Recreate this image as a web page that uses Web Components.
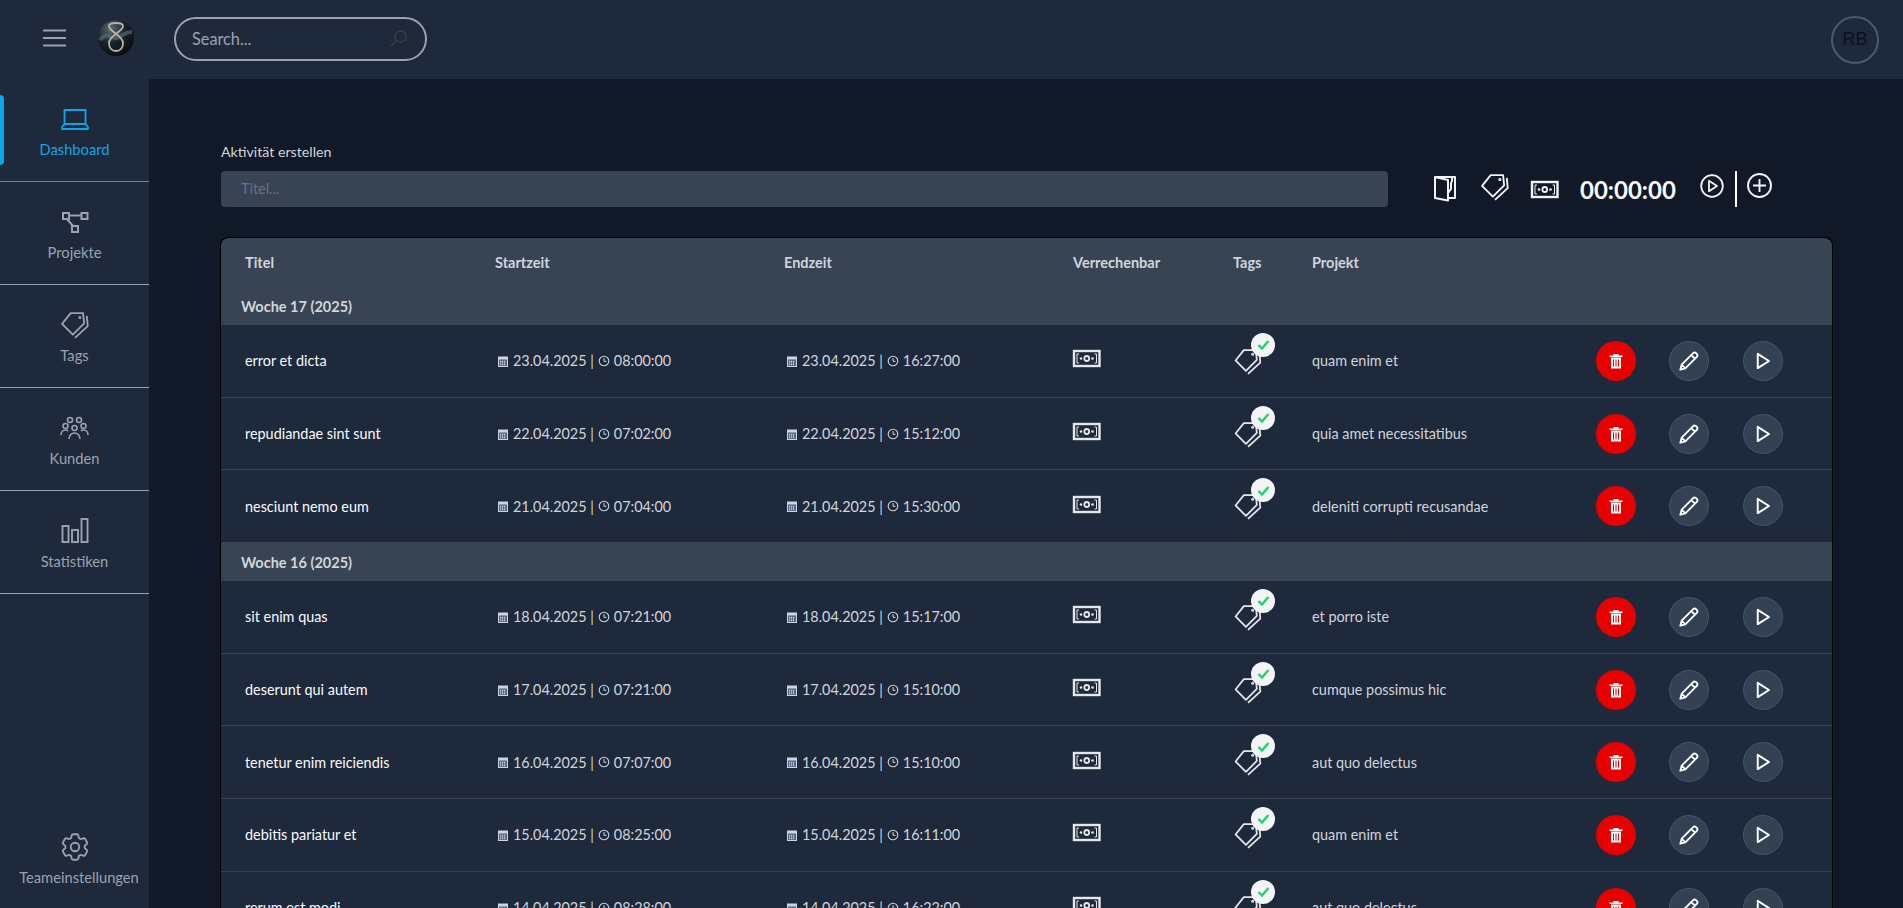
<!DOCTYPE html>
<html lang="de">
<head>
<meta charset="utf-8">
<title>Dashboard</title>
<style>
html,body{margin:0;height:100%;background:#111827;overflow:hidden;font-family:"Lato","Open Sans",sans-serif}
</style>
</head>
<body>
<app-shell>
  <app-topbar slot="top"></app-topbar>
  <app-sidebar slot="side">
    <nav-item icon="laptop" active>Dashboard</nav-item>
    <nav-item icon="nodes">Projekte</nav-item>
    <nav-item icon="tags">Tags</nav-item>
    <nav-item icon="people">Kunden</nav-item>
    <nav-item icon="bars">Statistiken</nav-item>
    <nav-item icon="gear" slot="bottom" plain>Teameinstellungen</nav-item>
  </app-sidebar>
  <activity-form></activity-form>
  <time-table>
    <week-row>Woche 17 (2025)</week-row>
    <time-row title="error et dicta" d="23.04.2025" s="08:00:00" e="16:27:00" p="quam enim et"></time-row>
    <time-row title="repudiandae sint sunt" d="22.04.2025" s="07:02:00" e="15:12:00" p="quia amet necessitatibus"></time-row>
    <time-row title="nesciunt nemo eum" d="21.04.2025" s="07:04:00" e="15:30:00" p="deleniti corrupti recusandae"></time-row>
    <week-row>Woche 16 (2025)</week-row>
    <time-row title="sit enim quas" d="18.04.2025" s="07:21:00" e="15:17:00" p="et porro iste"></time-row>
    <time-row title="deserunt qui autem" d="17.04.2025" s="07:21:00" e="15:10:00" p="cumque possimus hic"></time-row>
    <time-row title="tenetur enim reiciendis" d="16.04.2025" s="07:07:00" e="15:10:00" p="aut quo delectus"></time-row>
    <time-row title="debitis pariatur et" d="15.04.2025" s="08:25:00" e="16:11:00" p="quam enim et"></time-row>
    <time-row title="rerum est modi" d="14.04.2025" s="08:28:00" e="16:22:00" p="aut quo delectus"></time-row>
  </time-table>
</app-shell>
<script>
const ICONS={
 laptop:'<path d="M3.500 15V1h21v14M3.500 15 1 18v2h26v-2l-2.500-3z" fill="none" stroke="currentColor" stroke-width="1.800" stroke-linejoin="round"/>',
 nodes:'<g fill="none" stroke="currentColor" stroke-width="2"><rect x="1" y="1" width="6" height="6"/><rect x="19.500" y="1" width="6" height="6"/><rect x="10" y="14" width="6" height="6"/><path d="M7 3.500h12.500M5 7l6 7"/></g>',
 tags:'<g fill="none" stroke="currentColor" stroke-width="1.700" stroke-linejoin="round"><path d="M2 13 10 3h11.500l1 9.500L12 23z"/><path d="M25 5.500l.8 9.500L14 26"/><circle cx="18.500" cy="7" r=".6"/></g>',
 people:'<g fill="none" stroke="currentColor" stroke-width="1.600"><circle cx="10" cy="4" r="2.500"/><circle cx="19" cy="4" r="2.500"/><circle cx="5.500" cy="10" r="2.500"/><circle cx="14.500" cy="12" r="2.500"/><circle cx="23.500" cy="10" r="2.500"/><path d="M1 19c0-3 2-5 4.500-5 1 0 2 .3 2.700 1M28 19c0-3-2-5-4.500-5-1 0-2 .3-2.700 1M9 23c0-3.500 2.500-6 5.500-6s5.500 2.500 5.500 6"/></g>',
 bars:'<g fill="none" stroke="currentColor" stroke-width="1.900"><rect x="1.500" y="8" width="6" height="16"/><rect x="11" y="12" width="6" height="12"/><rect x="20.500" y="1" width="6" height="23"/></g>',
 gear:'<g fill="none" stroke="currentColor" stroke-width="1.300" stroke-linecap="round" stroke-linejoin="round"><path d="M9.594 3.940c.09-.542.56-.94 1.110-.94h2.593c.55 0 1.020.398 1.110.94l.213 1.281c.063.374.313.686.645.87.074.04.147.083.22.127.325.196.72.257 1.075.124l1.217-.456a1.125 1.125 0 0 1 1.370.49l1.296 2.247a1.125 1.125 0 0 1-.26 1.431l-1.003.827c-.293.241-.438.613-.43.992a7.723 7.723 0 0 1 0 .255c-.008.378.137.75.43.991l1.004.827c.424.35.534.955.26 1.430l-1.298 2.247a1.125 1.125 0 0 1-1.369.491l-1.217-.456c-.355-.133-.75-.072-1.076.124a6.470 6.470 0 0 1-.22.128c-.331.183-.581.495-.644.869l-.213 1.281c-.09.543-.56.94-1.110.94h-2.594c-.55 0-1.019-.398-1.110-.94l-.213-1.281c-.062-.374-.312-.686-.644-.87a6.520 6.520 0 0 1-.22-.127c-.325-.196-.72-.257-1.076-.124l-1.217.456a1.125 1.125 0 0 1-1.369-.49l-1.297-2.247a1.125 1.125 0 0 1 .26-1.431l1.004-.827c.292-.24.437-.613.43-.991a6.932 6.932 0 0 1 0-.255c.007-.38-.138-.751-.43-.992l-1.004-.827a1.125 1.125 0 0 1-.26-1.430l1.297-2.247a1.125 1.125 0 0 1 1.370-.491l1.216.456c.356.133.751.072 1.076-.124.072-.044.146-.086.22-.128.332-.183.582-.495.644-.869l.214-1.280Z"/><circle cx="12" cy="12" r="3"/></g>',
 search:'<g fill="none" stroke="currentColor" stroke-width="1.300"><circle cx="10.500" cy="6.500" r="5.500"/><path d="M6.500 10.500 1 16"/></g>',
 burger:'<path d="M0 1.500h23M0 9h23M0 16.500h23" stroke="currentColor" stroke-width="2"/>',
 folder:'<path d="M2 3v21l13 2.500V19l3-4V9l1-2V3zM2 3l13 3v13M19 3h3v21h-7" fill="none" stroke="currentColor" stroke-width="2" stroke-linejoin="round"/>',
 money:'<g fill="none" stroke="currentColor"><rect x="1" y="1" width="25.500" height="15" stroke-width="2.400"/><path d="M6 4H4v9h2M21.500 4h2v9h-2" stroke-width="1"/><ellipse cx="13.750" cy="8.500" rx="2.400" ry="2.500" stroke-width="1.800"/></g><circle cx="8" cy="8.500" r="1.300" fill="currentColor"/><circle cx="19.500" cy="8.500" r="1.300" fill="currentColor"/>',
 play:'<path d="M5 2.500v19L20 12z" fill="none" stroke="currentColor" stroke-width="2.600" stroke-linejoin="round"/>',
 playc:'<circle cx="12" cy="12" r="10.800" fill="none" stroke="currentColor" stroke-width="1.800"/><path d="M9 6.800v10.400l8-5.200z" fill="none" stroke="currentColor" stroke-width="1.800" stroke-linejoin="round"/>',
 plusc:'<circle cx="12.500" cy="12.500" r="11.500" fill="none" stroke="currentColor" stroke-width="1.900"/><path d="M12.500 6v13M6 12.500h13" stroke="currentColor" stroke-width="1.900"/>',
 trash:'<path d="M.5 2.500h4V1h5v1.500h4V4H.5zM2 4.500h10v11H2z" fill="currentColor"/><path d="M4.500 6.500v7M7 6.500v7M9.500 6.500v7" stroke="#e60000" stroke-width="1"/>',
 pencil:'<path d="M2.500 21.500 4 16 16.500 3.500a2.300 2.300 0 0 1 3.200 0l.8.800a2.300 2.300 0 0 1 0 3.200L8 20zM14.500 5.500l4 4M4 16l4 4" fill="none" stroke="currentColor" stroke-width="2" stroke-linejoin="round"/>',
 cal:'<rect x="1.500" y="2" width="9" height="9.500" fill="#52617e" stroke="currentColor"/><rect x="1.500" y="2" width="9" height="2.500" fill="currentColor"/><path d="M3 6.300h6M3 8h6M3 9.700h6" stroke="#dfe6f2" stroke-dasharray="1.200 .8"/>',
 clock:'<circle cx="6" cy="6" r="4.800" fill="none" stroke="currentColor" stroke-width="1.100"/><path d="M6 3v3.300H8.500" fill="none" stroke="currentColor" stroke-width="1"/>',
 logo:'<defs><radialGradient id="lg" cx=".35" cy=".25" r=".9"><stop offset="0" stop-color="#5c6c78"/><stop offset=".45" stop-color="#1a2228"/><stop offset="1" stop-color="#06080b"/></radialGradient></defs><circle cx="18" cy="18" r="18" fill="url(#lg)"/><path d="M2 20c6-8 12-2 16-2s8-6 16-6" stroke="#5f7280" stroke-width="4" fill="none" opacity=".6"/><path d="M11 6c0 6 14 9 14 17 0 5-3 8-7 8s-7-3-7-8c0-8 14-11 14-17 0-2-3-3-7-3s-7 1-7 3z" fill="none" stroke="#b8b4a8" stroke-width="1.800"/>'
};
const define=(n,c)=>customElements.define(n,c);
class Base extends HTMLElement{
  constructor(){super();this.attachShadow({mode:'open'});}
  render(h){this.shadowRoot.innerHTML=h;}
}
define('x-icon',class extends Base{
  connectedCallback(){
    const n=this.getAttribute('name'),w=this.getAttribute('w'),h=this.getAttribute('h'),vb=this.getAttribute('vb')||`0 0 ${w} ${h}`;
    this.render(`<style>:host{display:inline-flex;width:${w}px;height:${h}px;flex:none}svg{display:block;width:100%;height:100%;overflow:visible}</style><svg viewBox="${vb}" aria-hidden="true">${ICONS[n]}</svg>`);
  }
});
define('app-shell',class extends Base{
  connectedCallback(){this.render(`<style>
    :host{display:grid;grid-template:79px 1fr / 149px 1fr;height:908px;overflow:hidden;background:#111827}
    ::slotted([slot=top]){grid-column:1/3}
    main{padding:64px 71px 0 72px;min-width:0;overflow:hidden}
  </style><slot name="top"></slot><slot name="side"></slot><main><slot></slot></main>`);}
});
define('app-topbar',class extends Base{
  connectedCallback(){this.render(`<style>
    :host{display:flex;align-items:center;background:#1e293b;padding:0 24px 0 43px;color:#9ca3af}
    .burger{margin-right:32px;margin-top:-3px;display:flex}
    .logo{margin-right:40px;margin-top:-3px;display:flex}
    .search{box-sizing:border-box;width:253px;height:44px;border:2px solid #9ca3af;border-radius:22px;display:flex;align-items:center;padding:0 18px 0 16px;margin-top:-2px;
      font:16.300px Lato,sans-serif;color:#9ca3af;justify-content:space-between}
    .search x-icon{color:#374151}
    .avatar{box-sizing:border-box;margin-left:auto;width:48px;height:48px;border:2px solid #4b5a70;border-radius:50%;display:flex;align-items:center;justify-content:center;color:#0b1220;font:18px "Liberation Sans",sans-serif}
  </style>
  <span class="burger"><x-icon name="burger" w="23" h="18"></x-icon></span>
  <span class="logo"><x-icon name="logo" w="36" h="36"></x-icon></span>
  <div class="search"><span>Search...</span><x-icon name="search" w="17" h="17"></x-icon></div>
  <div class="avatar">RB</div>`);}
});
define('app-sidebar',class extends Base{
  connectedCallback(){this.render(`<style>
    :host{display:flex;flex-direction:column;background:#1e293b;height:829px}
    .s{flex:1;display:flex;flex-direction:column}
    .b{margin-top:auto;padding-bottom:22px}
  </style><div class="s"><slot></slot><div class="b"><slot name="bottom"></slot></div></div>`);}
});
define('nav-item',class extends Base{
  connectedCallback(){
    const a=this.hasAttribute('active'),p=this.hasAttribute('plain'),n=this.getAttribute('icon');
    const sz={laptop:[28,21,''],nodes:[26,21,''],tags:[28,28,'1 1 26 26'],people:[29,24,''],bars:[28,26,''],gear:[34,34,'0 0 24 24']}[n];
    const vb=sz[2]?` vb="${sz[2]}"`:'';
    this.render(`<style>
      :host{display:flex;box-sizing:border-box;position:relative;flex-direction:column;align-items:center;justify-content:flex-start;
        height:${p?'auto':'103px'};padding-top:${p?'0':'26px'};gap:${p?'7px':'8px'};border-bottom:${p?'0':'1.500px solid '+(a?'#0ea5e9':'#94a3b8')};
        color:${a?'#0ea5e9':'#9ca3af'};font:14.700px/17px Lato,sans-serif;white-space:nowrap}
      :host([active])::before{content:"";position:absolute;left:0;top:16px;width:4px;height:70px;border-radius:0 4px 4px 0;background:#0ea5e9}
      .i{height:${p?30:28}px;display:flex;align-items:center;justify-content:center}
      .t{padding-left:${p?9:0}px}
    </style><div class="i"><x-icon name="${n}" w="${sz[0]}" h="${sz[1]}"${vb}></x-icon></div><span class="t"><slot></slot></span>`);
  }
});
define('activity-form',class extends Base{
  connectedCallback(){this.render(`<style>
    :host{display:block;margin-bottom:31px}
    label{display:block;font:14.200px/17px Lato,sans-serif;color:#d1d5db;margin-bottom:11px}
    .row{display:flex;align-items:center;height:36px}
    .in{box-sizing:border-box;width:1167px;height:36px;background:#384354;border-radius:4px;padding:0 20px;font:14.400px/36px Lato,sans-serif;color:#6b7280}
    .tools{display:flex;align-items:center;color:#f3f4f6;margin-left:45px}
    .tools>*:not(.sep){margin-top:-7px}
    .t{font:700 24px Lato,sans-serif;margin-left:22px;margin-right:24px;color:#f9fafb;white-space:nowrap}
    .sep{width:2px;height:36px;background:#fff;margin:0 10px 0 11px}
  </style>
  <label>Aktivität erstellen</label>
  <div class="row"><div class="in">Titel...</div>
    <div class="tools">
      <x-icon name="folder" w="24" h="28" style="margin-top:-2px"></x-icon>
      <x-icon name="tags" w="28" h="28" vb="1 1 26 26" style="margin-left:24px;margin-top:-5px"></x-icon>
      <x-icon name="money" w="27" h="17" style="margin-left:22px;margin-top:0"></x-icon>
      <span class="t" style="margin-top:0">00:00:00</span>
      <x-icon name="playc" w="24" h="24"></x-icon>
      <span class="sep"></span>
      <x-icon name="plusc" w="25" h="25"></x-icon>
    </div>
  </div>`);}
});
const COLS='grid-template-columns:250px 289px 289px 160px 79px 284px 40px 40px 40px;';
define('time-table',class extends Base{
  connectedCallback(){this.render(`<style>
    :host{display:block;width:1611px;background:#1e293b;border-radius:8px 8px 0 0;box-shadow:-1px -1px 0 #000,1px -1px 0 #000;overflow:hidden}
    .h{display:grid;${COLS}padding:0 0 0 24px;height:49px;align-items:center;background:#384354;font:700 14.500px Lato,sans-serif;color:#d1d5db;white-space:nowrap}
  </style><div class="h"><span>Titel</span><span>Startzeit</span><span>Endzeit</span><span>Verrechenbar</span><span>Tags</span><span>Projekt</span></div><slot></slot>`);}
});
define('week-row',class extends Base{
  connectedCallback(){this.render(`<style>
    :host{display:flex;box-sizing:border-box;height:38px;align-items:center;padding:0 0 0 20px;background:#384354;font:700 14.500px Lato,sans-serif;color:#d1d5db}
  </style><slot></slot>`);}
});
define('round-btn',class extends Base{
  connectedCallback(){
    const red=this.hasAttribute('red');
    this.render(`<style>
    :host{display:flex;box-sizing:border-box;width:40px;height:40px;border-radius:50%;align-items:center;justify-content:center;color:#fff;
      background:${red?'#e60000':'#334155'};border:${red?'0':'1px solid #475569'}}
    </style><slot></slot>`);
  }
});
define('time-row',class extends Base{
  connectedCallback(){
    const g=k=>this.getAttribute(k);
    const dt=t=>`<span class="dt"><x-icon name="cal" w="12" h="12"></x-icon><span>${g('d')} | </span><x-icon name="clock" w="12" h="12"></x-icon><span>${t}</span></span>`;
    this.render(`<style>
    :host{display:grid;box-sizing:border-box;${COLS}padding-left:24px;height:72.700px;align-items:center;border-bottom:1px solid #374151;background:#1e293b;font:14.400px Lato,sans-serif;color:#d1d5db;white-space:nowrap}
    .title{color:#f9fafb}
    .dt{display:flex;align-items:center;gap:4px;margin-left:2px}
    .dt x-icon{color:#cbd5e1}
    .m{color:#e5e7eb;margin-top:-4px;display:flex}
    .tag{position:relative;width:28px;height:28px;color:#e5e7eb;margin-top:-2px;display:block}
    .tag x-icon{position:absolute;left:0;top:2px}
    .tag .ck{position:absolute;left:18px;top:-13px;width:24px;height:24px;border-radius:50%;background:#f3f4f6;display:flex;align-items:center;justify-content:center}
    round-btn:nth-of-type(2){transform:translateX(33px)}
    round-btn:nth-of-type(3){transform:translateX(67px)}
    </style>
    <span class="title">${g('title')}</span>
    ${dt(g('s'))}${dt(g('e'))}
    <span class="m"><x-icon name="money" w="27" h="17"></x-icon></span>
    <span class="tag"><x-icon name="tags" w="30" h="27" vb="1 1 26 26"></x-icon><span class="ck"><svg width="15" height="15" viewBox="0 0 15 15"><path d="M2.500 8 6 11.500 12.500 4" fill="none" stroke="#1fd26f" stroke-width="2.400"/></svg></span></span>
    <span>${g('p')}</span>
    <round-btn red><x-icon name="trash" w="14" h="16"></x-icon></round-btn>
    <round-btn><x-icon name="pencil" w="22" h="22" vb="0 0 24 24"></x-icon></round-btn>
    <round-btn><x-icon name="play" w="18" h="18" vb="0 0 24 24"></x-icon></round-btn>`);
  }
});
</script>
</body>
</html>
